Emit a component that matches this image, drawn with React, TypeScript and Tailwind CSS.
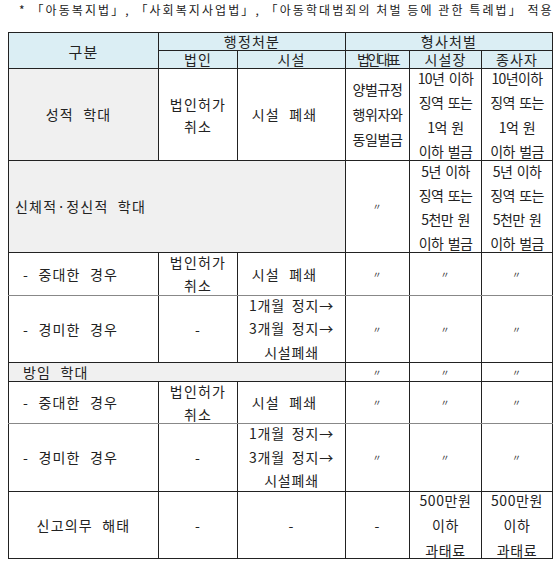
import * as React from "react";

const FONT = "font-['Noto_Sans_CJK_KR','Noto_Sans',sans-serif]";
const SAME = "〃";

type CellProps = {
  h: number;
  children?: React.ReactNode;
  className?: string;
  inner?: string;
  colSpan?: number;
  rowSpan?: number;
};

// fixed-height box so long text spills over the line instead of growing the row
function Cell({ h, children, className = "", inner = "", colSpan, rowSpan }: CellProps) {
  return (
    <td colSpan={colSpan} rowSpan={rowSpan} className={`border border-[#222] p-0 align-middle ${className}`}>
      <div className={`flex flex-col items-center justify-center text-center ${inner}`} style={{ height: h }}>
        {children}
      </div>
    </td>
  );
}

function Same({ h, className = "" }: { h: number; className?: string }) {
  return (
    <Cell h={h} className={className}>
      <span className="text-[9px] leading-none text-[#333]">{SAME}</span>
    </Cell>
  );
}

function Lines({ items, lh = "leading-[23px]" }: { items: string[]; lh?: string }) {
  return (
    <div className={lh}>
      {items.map((t) => (
        <div key={t} className="whitespace-nowrap">
          {t}
        </div>
      ))}
    </div>
  );
}

const pen = "text-[14px] tracking-[-0.6px] [word-spacing:2px]";
const hd = "block leading-[15px]";

export default function App() {
  const dot = "border-b-[#888] border-b-dotted";
  const head = "bg-[#dbeef4]";
  const gray = "bg-[#f0f0f0]";

  return (
    <div className={`${FONT} w-[560px] h-[567px] bg-white text-[#222]`}>
      <div className="h-[32px] pl-[19px] pt-[2px] text-[12px] leading-[16px] tracking-[2.08px] whitespace-nowrap">
        * 「아동복지법」, 「사회복지사업법」, 「아동학대범죄의 처벌 등에 관한 특례법」 적용
      </div>
      <div className="pl-[8px]">
        <table className="table-fixed border-collapse border border-[#444] text-[14px] tracking-[1.2px] [word-spacing:5px]">
          <colgroup>
            <col className="w-[150px]" />
            <col className="w-[79px]" />
            <col className="w-[108px]" />
            <col className="w-[64px]" />
            <col className="w-[72px]" />
            <col className="w-[71px]" />
          </colgroup>
          <tbody>
            <tr>
              <Cell h={17} rowSpan={2} className={head} inner="!justify-start pt-[1px]">
                <span className="text-[15px] leading-[18px]">구분</span>
              </Cell>
              <Cell h={17} colSpan={2} className={head}>
                <span className={hd}>행정처분</span>
              </Cell>
              <Cell h={17} colSpan={3} className={head}>
                <span className={hd}>형사처벌</span>
              </Cell>
            </tr>
            <tr>
              <Cell h={17} className={head}>
                <span className={hd}>법인</span>
              </Cell>
              <Cell h={17} className={head}>
                <span className={hd}>시설</span>
              </Cell>
              <Cell h={17} className={head}>
                <span className={`${hd} tracking-[-2.6px]`}>법인대표</span>
              </Cell>
              <Cell h={17} className={head}>
                <span className={hd}>시설장</span>
              </Cell>
              <Cell h={17} className={head}>
                <span className={hd}>종사자</span>
              </Cell>
            </tr>

            {/* 성적 학대 */}
            <tr>
              <Cell h={91} className={gray} inner="pr-[10px]">
                성적 학대
              </Cell>
              <Cell h={91}>
                <Lines items={["법인허가", "취소"]} lh="leading-[22px]" />
              </Cell>
              <Cell h={91} inner="pr-[14px]">
                시설 폐쇄
              </Cell>
              <Cell h={91}>
                <div className="tracking-[-0.4px]">
                  <Lines items={["양벌규정", "행위자와", "동일벌금"]} lh="leading-[25px]" />
                </div>
              </Cell>
              <Cell h={91} inner={pen}>
                <Lines items={["10년 이하", "징역 또는", "1억 원", "이하 벌금"]} lh="leading-[24.5px]" />
              </Cell>
              <Cell h={91} inner={pen}>
                <Lines items={["10년이하", "징역 또는", "1억 원", "이하 벌금"]} lh="leading-[24.5px]" />
              </Cell>
            </tr>

            {/* 신체적·정신적 학대 */}
            <tr>
              <Cell h={91} colSpan={3} className={gray} inner="!items-start pl-[6px]">
                신체적·정신적 학대
              </Cell>
              <Same h={91} />
              <Cell h={91} inner={pen}>
                <Lines items={["5년 이하", "징역 또는", "5천만 원", "이하 벌금"]} lh="leading-[24px]" />
              </Cell>
              <Cell h={91} inner={pen}>
                <Lines items={["5년 이하", "징역 또는", "5천만 원", "이하 벌금"]} lh="leading-[24px]" />
              </Cell>
            </tr>
            <tr>
              <Cell h={42} className={dot} inner="!items-start pl-[14px]">
                - 중대한 경우
              </Cell>
              <Cell h={42} className={dot}>
                <Lines items={["법인허가", "취소"]} lh="leading-[23px]" />
              </Cell>
              <Cell h={42} className={dot} inner="pr-[14px]">
                시설 폐쇄
              </Cell>
              <Same h={42} className={dot} />
              <Same h={42} className={dot} />
              <Same h={42} className={dot} />
            </tr>
            <tr>
              <Cell h={66} inner="!items-start pl-[14px]">
                - 경미한 경우
              </Cell>
              <Cell h={66}>-</Cell>
              <Cell h={66} inner="tracking-[0.8px] [word-spacing:3px]">
                <Lines items={["1개월 정지→", "3개월 정지→", "시설폐쇄"]} lh="leading-[23.5px]" />
              </Cell>
              <Same h={66} />
              <Same h={66} />
              <Same h={66} />
            </tr>

            {/* 방임 학대 */}
            <tr>
              <Cell h={18} colSpan={3} className={gray} inner="!items-start pl-[14px]">
                <span className="leading-none">방임 학대</span>
              </Cell>
              <Same h={18} />
              <Same h={18} />
              <Same h={18} />
            </tr>
            <tr>
              <Cell h={41} className={dot} inner="!items-start pl-[14px]">
                - 중대한 경우
              </Cell>
              <Cell h={41} className={dot}>
                <Lines items={["법인허가", "취소"]} lh="leading-[23px]" />
              </Cell>
              <Cell h={41} className={dot} inner="pr-[14px]">
                시설 폐쇄
              </Cell>
              <Same h={41} className={dot} />
              <Same h={41} className={dot} />
              <Same h={41} className={dot} />
            </tr>
            <tr>
              <Cell h={67} inner="!items-start pl-[14px]">
                - 경미한 경우
              </Cell>
              <Cell h={67}>-</Cell>
              <Cell h={67} inner="tracking-[0.8px] [word-spacing:3px]">
                <Lines items={["1개월 정지→", "3개월 정지→", "시설폐쇄"]} lh="leading-[23.5px]" />
              </Cell>
              <Same h={67} />
              <Same h={67} />
              <Same h={67} />
            </tr>

            {/* 신고의무 해태 */}
            <tr>
              <Cell h={66}>신고의무 해태</Cell>
              <Cell h={66}>-</Cell>
              <Cell h={66}>-</Cell>
              <Cell h={66}>-</Cell>
              <Cell h={66} inner="tracking-[0.6px]">
                <Lines items={["500만원", "이하", "과태료"]} lh="leading-[25px]" />
              </Cell>
              <Cell h={66} inner="tracking-[0.6px]">
                <Lines items={["500만원", "이하", "과태료"]} lh="leading-[25px]" />
              </Cell>
            </tr>
          </tbody>
        </table>
      </div>
    </div>
  );
}
